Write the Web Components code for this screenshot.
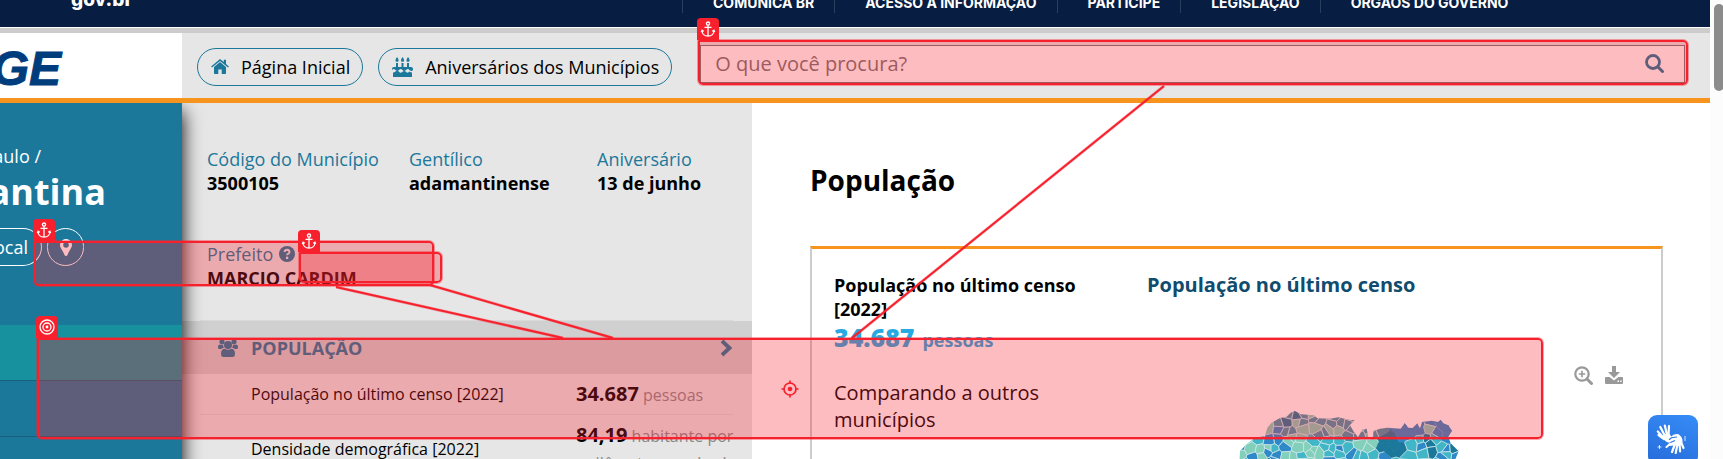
<!DOCTYPE html>
<html lang="pt-BR">
<head>
<meta charset="utf-8">
<title>Adamantina | Cidades e Estados</title>
<style>
html,body{margin:0;height:100%}
body{font-family:"Open Sans","Noto Sans",sans-serif;font-size:18px;line-height:24px;color:#000;background:#fff;overflow:hidden}
</style>
</head>
<body>
<city-page></city-page>
<script>
const define = (name, html, setup) => customElements.define(name, class extends HTMLElement {
  constructor() {
    super();
    this.attachShadow({ mode: 'open' }).innerHTML = html;
  }
  connectedCallback() { if (setup) setup(this, this.shadowRoot); }
});

const ICONS = {
  home: ['0 0 18 15', '<path fill="currentColor" d="M9 2.9 3 8v6.300q0 .7.7.7H7.300V10.500h3.400V15h3.600q.7 0 .7-.7V8z"/><path fill="currentColor" d="M9 0 .1 7.400l.9 1.100L9 1.900l8 6.600.9-1.100L15 5V.8h-2.200v2.300z"/>'],
  cake: ['0 0 21 20', '<path fill="currentColor" d="M4 6h2v5H4zM9.500 6h2v5h-2zM15 6h2v5h-2zM5 0q2.600 3 1 4.700H4Q2.600 3.500 5 0zm5.500 0q2.600 3 1 4.700h-2Q8.100 3.500 10.500 0zM16 0q2.600 3 1 4.700h-2Q13.600 3.500 16 0zM0 13v-1q0-2 2-2h17q2 0 2 2v1q-1.700 2-3.500 0-1.700-2-3.500 0t-3.500 0-3.500 0-3.500 0T0 13zM1 15.500q1.700 0 2.500-1 1.800-1.500 3.500.3 1.800 1.800 3.500 0t3.500 0 3.500-.2q1 .9 2.500.9V20H1z"/>'],
  search: ['0 0 19 19', '<circle cx="8" cy="8" r="6.500" fill="none" stroke="currentColor" stroke-width="2.800"/><path d="m13 13 4.500 4.500" stroke="currentColor" stroke-width="3" stroke-linecap="round"/>'],
  zoom: ['0 0 19 19', '<circle cx="8" cy="8" r="6.700" fill="none" stroke="currentColor" stroke-width="2.200"/><path d="m13 13 4.500 4.500" stroke="currentColor" stroke-width="3" stroke-linecap="round"/><path d="M8 4.800v6.400M4.800 8h6.400" stroke="currentColor" stroke-width="1.600"/>'],
  download: ['0 0 18 18', '<path fill="currentColor" d="M7 0h4v6h4L9 12 3 6h4zM0 12q0-1 1-1h3.500L9 14.500 13.500 11H17q1 0 1 1v5q0 1-1 1H1q-1 0-1-1z"/><path fill="#fff" d="M12.500 14.500H14V16h-1.500zM15.200 14.500h1.500V16h-1.500z"/>'],
  pin: ['0 0 12 17', '<path fill="currentColor" fill-rule="evenodd" d="M6 0a6 6 0 0 1 6 6c0 3-3 5.500-4.500 10q-.4 1-1.500 1t-1.500-1C3 11.500 0 9 0 6a6 6 0 0 1 6-6zm0 3.200a2.800 2.800 0 1 0 0 5.600 2.800 2.800 0 0 0 0-5.600z"/>'],
  help: ['0 0 16 16', '<circle cx="8" cy="8" r="8" fill="currentColor"/><path d="M5.400 6q.4-2.300 2.700-2.300 2.400.2 2.400 2.200 0 1.200-1.400 1.900-1 .6-1 1.500" fill="none" stroke="#e6e6e6" stroke-width="1.900"/><circle cx="8.100" cy="11.900" r="1.300" fill="#e6e6e6"/>'],
  people: ['0 0 20 18', '<g fill="currentColor"><circle cx="10" cy="6" r="4"/><circle cx="4" cy="2.800" r="2.600"/><circle cx="16" cy="2.800" r="2.600"/><path d="M3 15q0-5 3.500-5.300Q10 12 13.500 9.700 17 10 17 15q0 3-2.500 3h-9Q3 18 3 15zM0 8.500Q0 5.500 2 5.500q1.500 1 3 .2.200 2 1 3Q4 9.200 3.200 10H1.500Q0 10 0 8.500zM20 8.500q0-3-2-3-1.500 1-3 .2-.2 2-1 3 2 .5 2.800 1.300h1.700Q20 10 20 8.500z"/></g>'],
  chevron: ['0 0 13 18', '<path d="m2 2 7.500 7L2 16" fill="none" stroke="currentColor" stroke-width="3.800"/>'],
  anchor: ['0 0 22 22', '<g fill="none" stroke="currentColor" stroke-width="1.300"><circle cx="11" cy="5.600" r="1.600"/><path d="M11 7.200v11M7.500 9.300h7M5 12.300c0 3.500 2.500 5.900 6 5.900s6-2.400 6-5.900M4.300 14l.8-1.800 1.700 1M17.700 14l-.8-1.800-1.700 1"/></g>'],
  target: ['0 0 22 22', '<g fill="none" stroke="currentColor" stroke-width="1.300"><circle cx="11" cy="11" r="7"/><circle cx="11" cy="11" r="4"/></g><circle cx="11" cy="11" r="1.400" fill="currentColor"/>'],
  cross: ['0 0 18 18', '<g fill="none" stroke="currentColor" stroke-width="1.700"><circle cx="9" cy="9" r="6"/><path d="M9 .5V4M9 14v3.500M.5 9H4M14 9h3.500"/></g><circle cx="9" cy="9" r="2.300" fill="currentColor"/>'],
  hands: ['0 0 30 30', '<g fill="none" stroke="#fff" stroke-linecap="round" stroke-linejoin="round"><path stroke-width="2.200" d="M8 14 1.800 7.500M9 12 4.300 3M11 11 8.800 1.500M12.500 11 13 2M8 15l-5.500-4"/><path stroke-width="2.200" d="m19 20-3 8M21.500 20l-1.800 9M23.500 19l.6 8.500M24.500 17l3 7M14 20l-3.500 3"/></g><path fill="#fff" d="M6.500 12q4-3.500 7.300-2l1.300 2.500q3-2.800 7.500-2.300 4.500 3 3.900 8.300L23 22l-5-.5-4.500.5-1-2q1.500-.5 3-2.300l-2.600 1Q8.500 18 6.500 12z"/><path fill="none" stroke="#2c76e4" stroke-width="1.200" d="m21 13-5.500.7-2.500 2M14.500 18.500l4.500-2"/><path fill="none" stroke="#fff" stroke-width=".8" d="M29 12v5M3.500 21v4M1.500 23h4"/>']
};

customElements.define('ui-icon', class extends HTMLElement {
  connectedCallback() {
    const [box, body] = ICONS[this.getAttribute('name')];
    const [, , w, h] = box.split(' ');
    const root = this.shadowRoot || this.attachShadow({ mode: 'open' });
    root.innerHTML = `<style>:host{display:inline-block;flex:none;line-height:0}</style>
      <svg width="${w}" height="${h}" viewBox="${box}" aria-hidden="true">${body}</svg>`;
  }
});

define('gov-bar', `<style>
  :host{display:flex;align-items:flex-end;height:27px;overflow:hidden;background:#071d41;color:#fff;border-bottom:1px solid #fff}
  .brand{box-sizing:border-box;color:#fff;text-decoration:none;font:800 19px/24px Inter,"Open Sans",sans-serif;width:682px;padding:0 0 15px 71px}
  nav{display:flex;padding-bottom:14px}
  a.item{color:#fff;text-decoration:none;font:700 14px/20px Inter,"Open Sans",sans-serif;padding:0 20px 0 30px;border-left:1px solid #2b3e5e;white-space:nowrap}
  </style>
  <a class="brand" href="#">gov.br</a>
  <nav><a class="item" href="#">COMUNICA BR</a><a class="item" href="#">ACESSO À INFORMAÇÃO</a><a class="item" href="#">PARTICIPE</a><a class="item" href="#">LEGISLAÇÃO</a><a class="item" href="#">ÓRGÃOS DO GOVERNO</a></nav>`);

define('pill-link', `<style>
  :host{display:block}
  a{display:flex;align-items:center;gap:12px;box-sizing:border-box;height:38px;padding:0 12px 0 13px;border:1px solid #1c789b;border-radius:19px;color:#000;text-decoration:none;white-space:nowrap}
  ::slotted(ui-icon){color:#1c789b}
  </style><a href="#"><slot name="icon"></slot><span><slot></slot></span></a>`);

define('search-box', `<style>
  :host{display:block}
  form{display:flex;align-items:center;box-sizing:border-box;height:38px;padding-right:20px;background:#fff;border:1px solid #767676}
  input{flex:1;min-width:0;border:0;outline:0;padding:0 14px;background:none;font:20px/36px "Open Sans",sans-serif}
  input::placeholder{color:#757575;opacity:1}
  button{border:0;padding:0;background:none;color:#1c789b;line-height:0}
  </style>
  <form><input type="search" aria-label="Pesquisar" placeholder="O que você procura?"><button type="button" aria-label="Buscar"><ui-icon name="search"></ui-icon></button></form>`);

define('site-header', `<style>
  :host{display:flex;height:65px;background:#e6e6e6;border-top:5px solid #ccc;border-bottom:5px solid #f7941e}
  .logo{box-sizing:border-box;width:182px;background:#fff;color:#003d7d;padding-top:10px;text-decoration:none;font:italic bold 48px/52px "Liberation Sans",sans-serif;-webkit-text-stroke:1px #003d7d}
  .logo span{display:flex;justify-content:flex-end;width:61px}
  .tools{flex:1;display:flex;align-items:center;gap:15px;padding:2px 25px 0 15px}
  search-box{flex:1;margin:0 0 6px 13px}
  </style>
  <a class="logo" href="#"><span>GE</span></a>
  <div class="tools">
    <pill-link><ui-icon slot="icon" name="home"></ui-icon>Página Inicial</pill-link>
    <pill-link><ui-icon slot="icon" name="cake"></ui-icon>Aniversários dos Municípios</pill-link>
    <search-box></search-box>
  </div>`);

define('place-panel', `<style>
  :host{display:block;width:182px;background:#1c789b;color:#fff;box-shadow:0 8px 18px #000;clip-path:inset(0 -30px 0 0);z-index:1}
  .crumb,h1{display:flex;justify-content:flex-end;margin:0;white-space:nowrap}
  .crumb{width:41px;padding-top:41px}
  h1{width:106px;font-size:36px;line-height:48px}
  .local{display:flex;gap:5px;padding:12px 0 59px}
  button{box-sizing:border-box;height:38px;border:1px solid #fff;background:none;color:#fff;padding:0;font:500 18px/24px "Open Sans",sans-serif;display:flex;align-items:center;justify-content:flex-end}
  .pick{width:42px;padding-right:13px;border-left:0;border-radius:0 19px 19px 0}
  .pin{width:37px;border-radius:19px;justify-content:center}
  ul{list-style:none;margin:0;padding:0}
  li{height:55px;border-bottom:1px solid #17607c}
  li.on{background:#17919d}
  </style>
  <div class="crumb">aulo /</div><h1>antina</h1>
  <div class="local"><button class="pick">ocal</button><button class="pin" aria-label="Ver no mapa"><ui-icon name="pin"></ui-icon></button></div>
  <ul><li class="on"></li><li></li><li></li></ul>`);

define('fact-item', `<style>
  :host{display:block}
  .label{display:flex;align-items:center;gap:6px;color:#1c789b}
  .value{font-weight:700}
  </style><div class="label"><slot name="label"></slot></div><div class="value"><slot></slot></div>`);

define('facts-panel', `<style>
  :host{display:block;background:#e6e6e6}
  .facts{display:grid;grid-template-columns:202px 188px auto;row-gap:47px;padding:44px 0 30px 25px}
  .group{display:flex;align-items:center;box-sizing:border-box;height:53px;padding:0 19px 0 36px;background:#d0d0d0;color:#1c789b;font-weight:700}
  .group span{flex:1;padding-left:13px}
  .line{height:1px;background:#dadada;margin:0 19px 0 18px}
  table{table-layout:fixed;width:533px;margin-left:18px;border-collapse:collapse}
  td{padding:0;border-bottom:1px solid #d8d8d8;font-size:16px;vertical-align:middle}
  td:first-child{box-sizing:border-box;width:376px;padding-left:51px}
  .first td{height:40px}
  .num{white-space:nowrap}
  .second .num{padding:6px 0;line-height:27px;vertical-align:top}
  b{font-size:20px}
  small{font-size:16px;color:#888}
  </style>
  <div class="facts">
    <fact-item><span slot="label">Código do Município</span>3500105</fact-item>
    <fact-item><span slot="label">Gentílico</span>adamantinense</fact-item>
    <fact-item><span slot="label">Aniversário</span>13 de junho</fact-item>
    <fact-item><span slot="label">Prefeito</span><ui-icon slot="label" name="help"></ui-icon>MARCIO CARDIM</fact-item>
  </div>
  <div class="line"></div>
  <div class="group"><ui-icon name="people"></ui-icon><span>POPULAÇÃO</span><ui-icon name="chevron"></ui-icon></div>
  <table>
    <tr class="first"><td>População no último censo [2022]</td><td class="num"><b>34.687</b> <small>pessoas</small></td></tr>
    <tr class="second"><td>Densidade demográfica [2022]</td><td class="num"><b>84,19</b> <small>habitante por<br>quilômetro quadrado</small></td></tr>
  </table>`);

/* Choropleth of municipalities: irregular cells clipped to the territory's outline. */
define('state-map', `<style>:host{display:block;width:240px;line-height:0}</style>
  <svg width="240" height="64" viewBox="0 0 720 192" role="img" aria-label="Mapa">
  <clipPath id="land"><path d="M28 192 30 165 50 145 75 125 105 120 112 95 125 80 150 66 170 62 182 50 195 45 212 55 252 58 262 67 300 68 325 64 355 71 374 73 360 88 370 105 384 124 398 100 410 98 416 128 428 128 430 105 450 98 472 95 512 98 524 82 535 95 548 96 562 82 570 98 576 78 605 74 624 78 632 71 640 82 655 88 666 104 655 122 662 142 686 166 675 192Z"/></clipPath>
  <g clip-path="url(#land)" stroke="#c9e5e8" stroke-width="2.500" stroke-linejoin="round"></g></svg>`,
  (host, root) => {
    let seed = 977;
    const rnd = () => (seed = (seed * 16807) % 2147483647) / 2147483647;
    const colors = { b: '#2f89c9', t: '#41b6c6', g: '#82cfba', d: '#1c789b', m: '#3f96ab' };
    /* Scattered town centres; each cell is a square cut by the bisectors to its neighbours. */
    const towns = [];
    for (let y = 40; y < 200; y += 25) for (let x = 20; x < 700; x += 27) {
      const big = x > 425 && x < 600;
      if (big && rnd() < .4) continue;
      towns.push([x + rnd() * 26, y + rnd() * 24]);
    }
    const clip = (poly, a, b) => {
      const mx = (a[0] + b[0]) / 2, my = (a[1] + b[1]) / 2, nx = b[0] - a[0], ny = b[1] - a[1];
      const side = p => (p[0] - mx) * nx + (p[1] - my) * ny;
      const out = [];
      poly.forEach((p, i) => {
        const q = poly[(i + 1) % poly.length], s = side(p), t = side(q);
        if (s <= 0) out.push(p);
        if (s * t < 0) { const k = s / (s - t); out.push([p[0] + (q[0] - p[0]) * k, p[1] + (q[1] - p[1]) * k]); }
      });
      return out;
    };
    root.querySelector('g').innerHTML = towns.map(a => {
      const [x, y] = a;
      let poly = [[x - 70, y - 70], [x + 70, y - 70], [x + 70, y + 70], [x - 70, y + 70]];
      for (const b of towns) if (b !== a && Math.hypot(b[0] - x, b[1] - y) < 140) poly = clip(poly, a, b);
      let pool = 'bbtgtgdbtg';
      if (y < 126) pool = x < 150 ? 'ggmgb' : x < 255 ? 'gggmgd' : x < 465 ? 'mmmmg' : x > 575 && x < 625 && y > 70 ? 'gb' : 'b';
      else if (x > 430 && x < 510 && y < 178) pool = 'd';
      else if (x > 190 && x < 265) pool = 'gggt';
      else if (x > 490) pool = 'bbbttd';
      const c = colors[pool[Math.floor(rnd() * pool.length)]];
      return `<polygon points="${poly.map(p => p.map(Math.round).join()).join(' ')}" fill="${c}"${pool === 'd' || pool === 'b' ? ` stroke="${c}"` : ''}/>`;
    }).join('');
  });

define('data-card', `<style>
  :host{display:grid;grid-template-columns:313px 1fr auto;border:solid #ccc;border-width:3px 2px 0;border-top-color:#f7941e;padding:24px 38px 0 22px;min-height:300px}
  h3{margin:0;font-size:18px;line-height:24px;width:260px}
  .total{display:flex;align-items:baseline;gap:8px;color:#27a9e1;font-weight:700;line-height:32px}
  .total b{font-size:25px}
  p{margin:23px 0 0;font-size:20px;line-height:27px;width:230px}
  h4{margin:0;font-size:20px;line-height:24px;color:#0f4c6e}
  state-map{margin:99px 0 0 83px}
  .actions{display:flex;align-items:flex-start;gap:12px;padding-top:93px}
  button{border:0;padding:0;background:none;color:#999;line-height:0}
  </style>
  <div><h3>População no último censo [2022]</h3><div class="total"><b>34.687</b> <span>pessoas</span></div><p>Comparando a outros municípios</p></div>
  <div><h4>População no último censo</h4><state-map></state-map></div>
  <div class="actions"><button aria-label="Ampliar"><ui-icon name="zoom"></ui-icon></button><button aria-label="Baixar"><ui-icon name="download"></ui-icon></button></div>`);

define('data-panel', `<style>
  :host{display:block;padding:57px 47px 0 58px}
  h2{margin:0 0 46px;font-size:28px;line-height:40px}
  </style><h2>População</h2><data-card></data-card>`);

define('scroll-rail', `<style>
  :host{display:block;width:13px;box-sizing:border-box;padding:4px 0 0 4px;background:#fcfcfc;overflow:hidden}
  div{width:10px;height:87px;border-radius:5px;background:#8b8b8b}
  </style><div></div>`);

define('libras-button', `<style>
  button{display:flex;align-items:center;justify-content:center;width:50px;height:50px;border:0;border-radius:9px;padding:0 4px 2px 0;background:linear-gradient(200deg,#368cf8,#266bd8)}
  :host{position:absolute;right:25px;top:415px}
  </style><button aria-label="Conteúdo acessível em Libras"><ui-icon name="hands"></ui-icon></button>`);

define('mark-box', `<style>
  :host{position:absolute;box-sizing:border-box;border:2px solid #f7212d;border-radius:1px 5px 5px 5px;background:rgba(247,33,45,.3);background-clip:padding-box;box-shadow:0 0 0 1px rgba(247,33,45,.4)}
  .tag{position:absolute;left:-3px;bottom:100%;width:22px;height:22px;margin-bottom:2px;border-radius:4px 4px 0 0;background:#f7212d;color:#fff}
  </style><div class="tag"><slot></slot></div>`);

define('mark-layer', `<style>
  :host{position:absolute;inset:0;z-index:2;pointer-events:none}
  .search{left:698px;right:35px;top:40px;height:45px}
  .mayor{left:34px;width:400px;top:241px;height:45px}
  .name{left:299px;width:143px;top:252px;height:31px}
  .goal{left:37px;right:180px;top:338px;height:101px}
  .lines{position:absolute;left:0;top:0}
  .cross{position:absolute;left:781px;top:380px;color:#f7212d}
  </style>
  <mark-box class="mayor"><ui-icon name="anchor"></ui-icon></mark-box>
  <mark-box class="name"><ui-icon name="anchor"></ui-icon></mark-box>
  <mark-box class="goal"><ui-icon name="target"></ui-icon></mark-box>
  <mark-box class="search"><ui-icon name="anchor"></ui-icon></mark-box>
  <svg class="lines" width="1200" height="340" fill="none"><path stroke="#f7212d" stroke-opacity=".35" stroke-width="3" d="M1164 86 852 338M336 287l227 51M430 285l183 53"/><path stroke="#f7212d" stroke-width="2" d="M1164 86 852 338M336 287l227 51M430 285l183 53"/></svg>
  <ui-icon class="cross" name="cross"></ui-icon>`);

define('city-page', `<style>
  :host{position:relative;display:flex;height:100vh;overflow:hidden}
  main{flex:1;min-width:0;display:flex;flex-direction:column}
  .columns{flex:1;min-height:0;display:grid;grid-template-columns:182px 570px 1fr}
  </style>
  <main><gov-bar></gov-bar><site-header></site-header>
  <div class="columns"><place-panel></place-panel><facts-panel></facts-panel><data-panel></data-panel></div></main>
  <scroll-rail></scroll-rail>
  <libras-button></libras-button>
  <mark-layer></mark-layer>`);
</script>
</body>
</html>
